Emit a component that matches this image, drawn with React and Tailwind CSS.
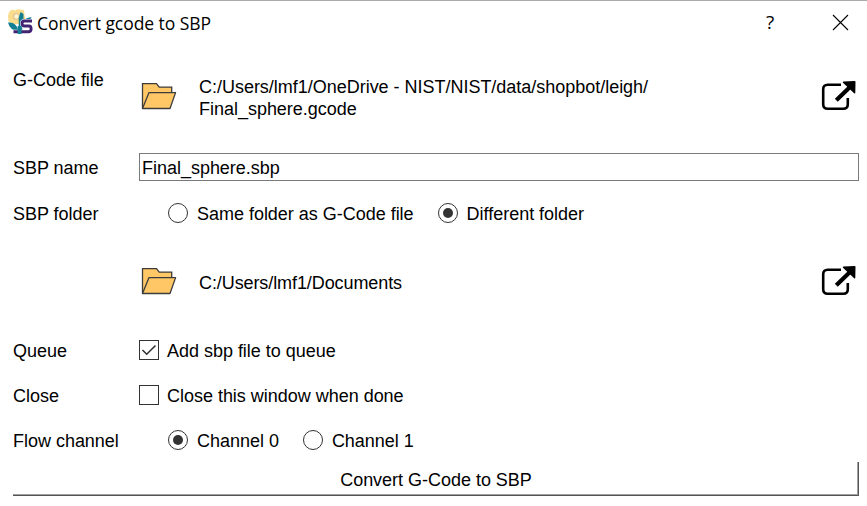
import React from "react";

function FolderIcon() {
  return (
    <svg width="36" height="28" viewBox="0 0 36 28" className="block shrink-0">
      <path d="M1.500 26.500V1.700h14l2.700 3.400h12.500V11" fill="#ffc766" stroke="#3c3c3c" strokeWidth="1.300" />
      <path d="M1.500 26.500 8 10.600h26.600L29 26.500Z" fill="#ffc766" stroke="#3c3c3c" strokeWidth="1.300" strokeLinejoin="round" />
    </svg>
  );
}

function OpenIcon() {
  return (
    <svg width="36" height="32" viewBox="0 0 36 32" className="block shrink-0">
      <path d="M21 4.700H7.700Q3.200 4.700 3.200 9.200v15.100q0 4.500 4.500 4.500h15.600q4.500 0 4.500-4.500V18" fill="none" stroke="#000" strokeWidth="2.600" />
      <path d="M16.300 20.200 30 7" fill="none" stroke="#000" strokeWidth="4.200" />
      <path d="M23.500 2.200 34.800 1.700 34.600 12.800Z" fill="#000" stroke="#000" strokeWidth="1.400" strokeLinejoin="round" />
    </svg>
  );
}

function AppIcon() {
  return (
    <svg width="26" height="26" viewBox="0 0 26 26" className="block shrink-0">
      <path d="M1 3 4 .500l3 1L10 .300l6 .700.500 5 1 4-4 5H4l-3.500-3L0 7Z" fill="#f9dc8c" />
      <circle cx="8.500" cy="7.500" r="3" fill="#fff5d4" stroke="#e6ca91" strokeWidth="1.600" />
      <path d="M12.500 3 15.500 5v7l-5-2.500Z" fill="#137f94" />
      <path d="M0 13.500q8-1 10.500 8Q2 22 0 13.500Z" fill="#137f94" />
      <path d="M12.500 10v15" stroke="#137f94" strokeWidth="3.600" />
      <path d="M14 14q2-5 9.500-6-.500 3-4 5Z" fill="#137f94" />
      <path d="M24 12h-7.500q-2.500 0-2.500 2.500t2.500 2.500H21q2.300 0 2.300 2.800t-2.300 2.900H5.500" fill="none" stroke="#fff" strokeWidth="4" />
      <path d="M24 12h-7.500q-2.500 0-2.500 2.500t2.500 2.500H21q2.100 0 2.100 2.800t-2.100 2.900H5.500" fill="none" stroke="#412273" strokeWidth="2.900" />
      <path d="M9.700 17h3.800v8H9.700Z" fill="#137f94" />
    </svg>
  );
}

function Radio({ checked, children, className }) {
  return (
    <label className={"flex items-center gap-[9px] " + className}>
      <span className="flex size-5 shrink-0 items-center justify-center rounded-full border border-[#333]">
        {checked && <span className="size-2.5 rounded-full bg-[#333]" />}
      </span>
      <span className="pt-0.5">{children}</span>
    </label>
  );
}

function Check({ checked, children }) {
  return (
    <label className="flex items-center gap-2">
      <span className="flex size-5 shrink-0 items-center justify-center border border-[#333]">
        {checked && (
          <svg width="18" height="18" viewBox="0 0 18 18" className="block">
            <path d="m2.500 9 4.200 4.200L15.500 4.500" fill="none" stroke="#333" strokeWidth="1.600" />
          </svg>
        )}
      </span>
      <span className="pt-0.5">{children}</span>
    </label>
  );
}

function Row({ label, className, children }) {
  return (
    <div className={"flex items-center " + className}>
      <div className="w-[126px] shrink-0 pt-0.5">{label}</div>
      {children}
    </div>
  );
}

export default function App() {
  return (
    <div className="h-[506px] w-[867px] overflow-hidden border-t border-[#a9a9a9] bg-white font-['Liberation_Sans',Arial,sans-serif] text-[18px] leading-[22px] tracking-[-0.020px] whitespace-nowrap text-black">
      <header className="flex h-[45px] items-center pl-2">
        <div className="pb-1"><AppIcon /></div>
        <h1 className="ml-[3px] grow pb-0.5 font-['Open_Sans','Segoe_UI',sans-serif] text-[17.500px] tracking-[-0.050px]">Convert gcode to SBP</h1>
        <button className="mr-[54px] w-4 pb-1 font-['Open_Sans','Segoe_UI',sans-serif] text-[19px]">?</button>
        <svg width="17" height="17" viewBox="0 0 17 17" className="mr-[18px] mb-0.5 block">
          <path d="m1 1 15 15M16 1 1 16" stroke="#000" strokeWidth="1.100" />
        </svg>
      </header>
      <main className="pr-2 pl-[13px]">
        <div className="flex h-[99px] pt-[23px]">
          <div className="w-[128px] shrink-0">G-Code file</div>
          <div className="pt-[13px]"><FolderIcon /></div>
          <p className="ml-[22px] grow pt-[7px]">
            C:/Users/lmf1/OneDrive - NIST/NIST/data/shopbot/leigh/<br />Final_sphere.gcode
          </p>
          <div className="mr-[3px] pt-[11px]"><OpenIcon /></div>
        </div>
        <Row label="SBP name" className="h-[44px]">
          <div className="flex h-7 grow items-center border border-[#7a7a7a] pt-0.5 pl-[2px]">Final_sphere.sbp</div>
        </Row>
        <Row label="SBP folder" className="h-12">
          <Radio className="ml-[29px]">Same folder as G-Code file</Radio>
          <Radio className="ml-6" checked>Different folder</Radio>
        </Row>
        <div className="flex h-[90px] items-center pl-[128px]">
          <div className="pb-0.5"><FolderIcon /></div>
          <p className="ml-[22px] grow pt-0.5 tracking-[-0.090px]">C:/Users/lmf1/Documents</p>
          <div className="mr-[3px] pb-0.5"><OpenIcon /></div>
        </div>
        <Row label="Queue" className="h-[45px]"><Check checked>Add sbp file to queue</Check></Row>
        <Row label="Close" className="h-[45px]"><Check>Close this window when done</Check></Row>
        <Row label="Flow channel" className="h-[45px]">
          <Radio className="ml-[29px]" checked>Channel 0</Radio>
          <Radio className="ml-6">Channel 1</Radio>
        </Row>
        <button className="block h-[34px] w-full border-r border-b border-[#555]">
          <span className="flex h-full items-center justify-center border-r border-b border-[#a0a0a0] pt-[3px] pl-0.5">Convert G-Code to SBP</span>
        </button>
      </main>
    </div>
  );
}
